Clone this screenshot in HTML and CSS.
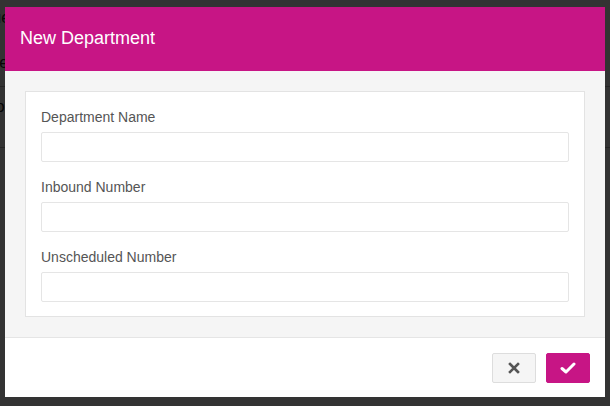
FILE: index.html
```html
<!DOCTYPE html>
<html lang="en">
<head>
    <meta charset="UTF-8">
    <meta name="viewport" content="width=device-width, initial-scale=1.0">
    <title>Departments</title>
    <link rel="stylesheet" href="styles.css">
</head>
<body>
    <!-- page behind the dialog, dimmed -->
    <div class="page">
        <div class="page-row first">Queue</div>
        <div class="page-row">Phone</div>
        <div class="page-row lined">Demo</div>
        <div class="page-row lined"></div>
    </div>
    <div class="backdrop"></div>

    <div class="modal">
        <div class="modal-header">
            <h4 class="modal-title">New Department</h4>
        </div>
        <div class="modal-body">
            <div class="panel">
                <div class="field">
                    <label for="departmentName">Department Name</label>
                    <input type="text" id="departmentName">
                </div>
                <div class="field">
                    <label for="inboundNumber">Inbound Number</label>
                    <input type="text" id="inboundNumber">
                </div>
                <div class="field">
                    <label for="unscheduledNumber">Unscheduled Number</label>
                    <input type="text" id="unscheduledNumber">
                </div>
            </div>
        </div>
        <div class="modal-footer">
            <button class="btn btn-cancel" title="Cancel">
                <svg width="12" height="12" viewBox="0 0 12 12">
                    <path d="M2 2 L10 10 M10 2 L2 10" stroke="#555" stroke-width="2.6" stroke-linecap="square"/>
                </svg>
            </button>
            <button class="btn btn-save" title="Save">
                <svg width="16" height="14" viewBox="0 0 16 14">
                    <path d="M2 7.5 L6 11 L14 3" fill="none" stroke="#fff" stroke-width="3" stroke-linecap="round" stroke-linejoin="round"/>
                </svg>
            </button>
        </div>
    </div>
</body>
</html>
```

FILE: styles.css
```css
body {
    margin: 0;
    font-family: "Liberation Sans", Arial, sans-serif;
    background: #fff;
    height: 406px;
    overflow: hidden;
}
.page {
    margin-left: -38px;
    font-size: 16px;
    color: #222;
}
.page-row {
    height: 46px;
    line-height: 46px;
}
.page-row.first {
    height: 40px;
    line-height: 36px;
}
.page-row.lined {
    border-top: 1px solid #bbb;
    height: 60px;
    line-height: 40px;
}
.backdrop {
    position: fixed;
    top: 0;
    left: 0;
    right: 0;
    bottom: 0;
    background: rgba(0, 0, 0, 0.8);
}
.modal {
    position: fixed;
    top: 7px;
    left: 5px;
    width: 600px;
    height: 390px;
    background: #fff;
    display: flex;
    flex-direction: column;
}
.modal-header {
    background: #c71585;
    height: 64px;
    padding: 0 15px;
    display: flex;
    align-items: center;
}
.modal-title {
    margin: 0;
    color: #fff;
    font-size: 18px;
    font-weight: normal;
    padding-bottom: 1px;
}
.modal-body {
    background: #f5f5f5;
    padding: 20px;
}
.panel {
    background: #fff;
    border: 1px solid #e3e3e3;
    padding: 15px 15px 14px;
}
.field {
    display: flex;
    flex-direction: column;
}
.field + .field {
    margin-top: 15px;
}
label {
    font-size: 14px;
    line-height: 20px;
    color: #555;
    margin-bottom: 5px;
}
input {
    box-sizing: border-box;
    height: 30px;
    border: 1px solid #e5e5e5;
    border-radius: 2px;
    padding: 4px 8px;
    font-family: inherit;
    font-size: 14px;
}
.modal-footer {
    flex: 1;
    border-top: 1px solid #e5e5e5;
    display: flex;
    justify-content: flex-end;
    align-items: center;
    gap: 10px;
    padding: 0 15px;
}
.btn {
    width: 44px;
    height: 30px;
    border-radius: 2px;
    display: flex;
    align-items: center;
    justify-content: center;
    padding: 0;
    cursor: pointer;
}
.btn-cancel {
    background: #f5f5f5;
    border: 1px solid #ddd;
}
.btn-save {
    background: #c71585;
    border: 1px solid #c71585;
}
```
